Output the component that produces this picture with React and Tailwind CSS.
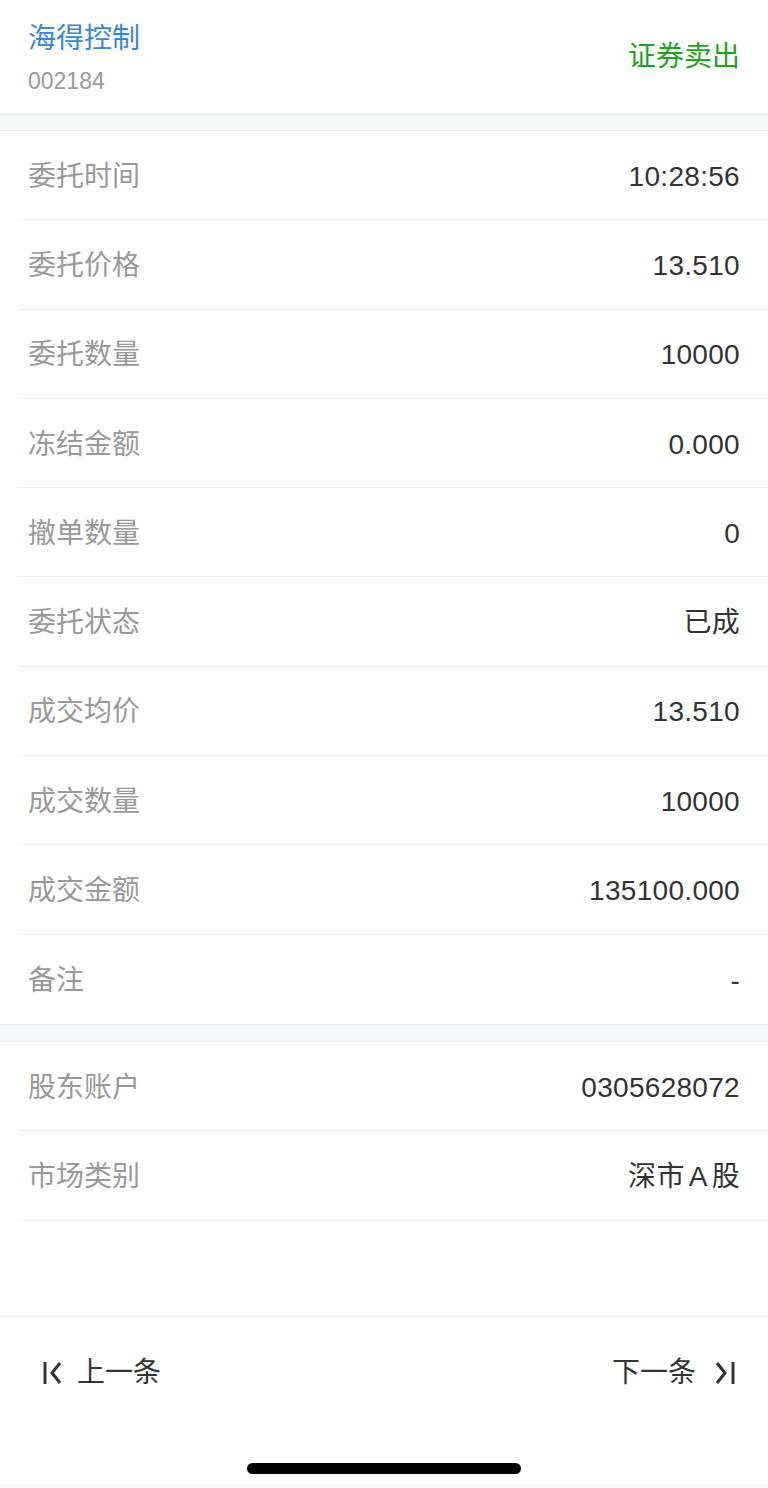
import React from 'react';

const font = { fontFamily: '"Liberation Sans", "Noto Sans CJK SC", sans-serif' };

const orderRows = [
  ['委托时间', '10:28:56'],
  ['委托价格', '13.510'],
  ['委托数量', '10000'],
  ['冻结金额', '0.000'],
  ['撤单数量', '0'],
  ['委托状态', '已成'],
  ['成交均价', '13.510'],
  ['成交数量', '10000'],
  ['成交金额', '135100.000'],
  ['备注', '-'],
];

const accountRows = [
  ['股东账户', '0305628072'],
  ['市场类别', <>深市<span className="mx-[4px]">A</span>股</>],
];

function Row({ label, value, last }) {
  return (
    <div className={`ml-[18px] h-[89.3px] flex items-center justify-between pl-[10px] pr-[28px] pt-[3px] ${last ? '' : 'border-b border-[#f0f0f0]'}`}>
      <span className="text-[28px] text-[#999999]">{label}</span>
      <span className="text-[28px] tracking-[0.3px] text-[#333333]">{value}</span>
    </div>
  );
}

export default function App() {
  return (
    <div className="w-[768px] h-[1488px] bg-white flex flex-col" style={font}>
      {/* stock header */}
      <div className="h-[114px] flex items-center justify-between pl-[28px] pr-[28px]">
        <div className="flex flex-col mt-[2px]">
          <span className="text-[28px] leading-[36px] text-[#3585dc]">海得控制</span>
          <span className="text-[23px] leading-[28px] text-[#9a9a9a] mt-[10px]">002184</span>
        </div>
        <span className="text-[28px] text-[#1ea31e]">证券卖出</span>
      </div>
      <div className="h-[17px] bg-[#f5f8f9] border-y border-[#ececec]" />

      <div>
        {orderRows.map(([l, v], i) => (
          <Row key={l} label={l} value={v} last={i === orderRows.length - 1} />
        ))}
      </div>
      <div className="h-[18px] bg-[#f5f8f9] border-y border-[#ececec]" />

      <div>
        {accountRows.map(([l, v]) => (
          <Row key={l} label={l} value={v} />
        ))}
      </div>

      <div className="flex-1" />

      {/* pager */}
      <div className="border-t border-[#f0f0f0] h-[172px] flex flex-col">
        <div className="h-[112px] flex items-center justify-between pl-[43px] pr-[32px]">
          <button className="flex items-center gap-[14px] text-[28px] text-[#333333]">
            <svg width="20" height="24" viewBox="0 0 20 24" fill="none" stroke="#333" strokeWidth="3">
              <line x1="2" y1="1" x2="2" y2="23" />
              <polyline points="17,2 9,12 17,22" />
            </svg>
            <span>上一条</span>
          </button>
          <button className="flex items-center gap-[18px] text-[28px] text-[#333333]">
            <span>下一条</span>
            <svg width="22" height="24" viewBox="0 0 22 24" fill="none" stroke="#333" strokeWidth="3">
              <polyline points="3,2 11,12 3,22" />
              <line x1="19" y1="1" x2="19" y2="23" />
            </svg>
          </button>
        </div>
        <div className="flex-1 flex justify-center items-start pt-[34px]">
          <div className="w-[274px] h-[11px] rounded-full bg-black" />
        </div>
        <div className="h-[4px] bg-[#f5f8f9]" />
      </div>
    </div>
  );
}
